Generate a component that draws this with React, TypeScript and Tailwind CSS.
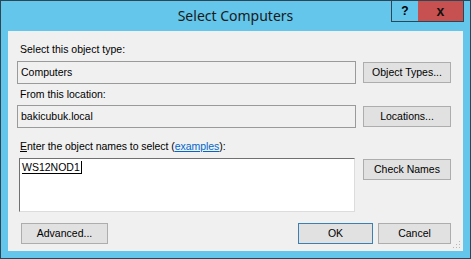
import React from 'react'

function Btn({ label, w, primary }: { label: string; w: string; primary?: boolean }) {
    return (
        <div
            className={`${w} h-[21px] flex items-center justify-center bg-[#e1e1e1] border ${
                primary ? 'border-[#3c7fb1]' : 'border-[#adadad]'
            }`}
        >
            {label}
        </div>
    )
}

function Field({ value }: { value: string }) {
    return (
        <div className="w-[339px] h-[23px] border border-[#9a9a9a] bg-[#f0f0f0] flex items-center pl-[3px]">
            {value}
        </div>
    )
}

export default function App() {
    return (
        <div className="w-[471px] h-[259px] border border-[#2d4656] bg-[#63c6ea] flex flex-col font-['Liberation_Sans',Arial,sans-serif] text-[10.5px] text-black leading-[13px]">
            {/* title bar */}
            <div className="h-[30px] grid grid-cols-[1fr_auto_1fr]">
                <div />
                <div className="pt-[6px] text-[14px] leading-[18px] font-['Noto_Sans',sans-serif] text-[#1a1a1a]">
                    Select Computers
                </div>
                <div className="flex justify-end pr-[6px]">
                    <div className="w-[27px] h-[21px] border-l border-b border-[#2d4656] flex items-center justify-center font-bold text-[12px]">
                        ?
                    </div>
                    <div className="w-[46px] h-[21px] bg-[#c75050] border-b border-r border-[#2d4656] flex items-center justify-center font-bold text-[14px] text-[#111]">
                        x
                    </div>
                </div>
            </div>

            {/* client area */}
            <div className="mx-[7px] h-[220px] bg-[#f0f0f0] flex flex-col pl-[9px] pt-[12px] relative">
                <div className="pl-[3px]">Select this object type:</div>
                <div className="flex items-center gap-[7px] mt-[5px]">
                    <Field value="Computers" />
                    <Btn label="Object Types..." w="w-[88px]" />
                </div>

                <div className="pl-[3px] mt-[4px]">From this location:</div>
                <div className="flex items-center gap-[7px] mt-[4px]">
                    <Field value="bakicubuk.local" />
                    <Btn label="Locations..." w="w-[88px]" />
                </div>

                <div className="pl-[3px] mt-[12px] tracking-[-0.05px]">
                    <span className="underline">E</span>nter the object names to select (
                    <span className="text-[#0066cc] underline">examples</span>):
                </div>
                <div className="flex items-start gap-[8px] mt-[5px] pl-[2px]">
                    <div className="w-[336px] h-[54px] bg-white border-t border-l border-[#707070] border-r border-b border-r-[#dcdcdc] border-b-[#dcdcdc] pl-[2px] pt-[2px]">
                        <span className="border-b border-r border-black pr-[1px]">WS12NOD1</span>
                    </div>
                    <div className="mt-[1px]">
                        <Btn label="Check Names" w="w-[88px]" />
                    </div>
                </div>

                <div className="flex items-center mt-[11px] pl-[4px] pr-[12px]">
                    <Btn label="Advanced..." w="w-[87px]" />
                    <div className="flex-1" />
                    <Btn label="OK" w="w-[75px]" primary />
                    <div className="w-[5px]" />
                    <Btn label="Cancel" w="w-[73px]" />
                </div>

                <svg className="absolute right-[2px] bottom-[2px]" width="8" height="8" viewBox="0 0 8 8">
                    <rect x="6" y="0" width="1" height="1" fill="#b8b8b8" />
                    <rect x="3" y="3" width="1" height="1" fill="#b8b8b8" />
                    <rect x="6" y="3" width="1" height="1" fill="#b8b8b8" />
                    <rect x="0" y="6" width="1" height="1" fill="#b8b8b8" />
                    <rect x="3" y="6" width="1" height="1" fill="#b8b8b8" />
                    <rect x="6" y="6" width="1" height="1" fill="#b8b8b8" />
                </svg>
            </div>
        </div>
    )
}
